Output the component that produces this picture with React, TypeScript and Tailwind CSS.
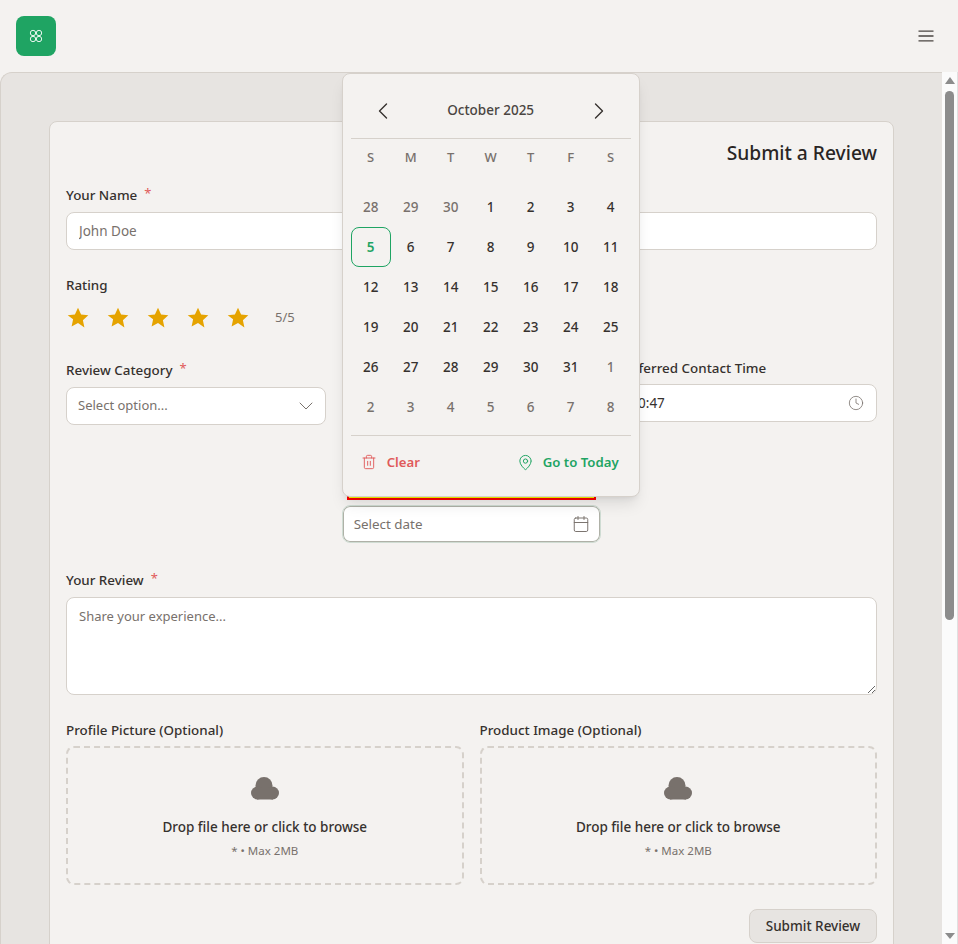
import { Calendar, ChevronDown, ChevronLeft, ChevronRight, Clock, MapPin, Trash2 } from 'lucide-react'

const font = "font-['Noto_Sans','Open_Sans',sans-serif]"

const days: [number, boolean][] = [
    [28, true], [29, true], [30, true], [1, false], [2, false], [3, false], [4, false],
    [5, false], [6, false], [7, false], [8, false], [9, false], [10, false], [11, false],
    [12, false], [13, false], [14, false], [15, false], [16, false], [17, false], [18, false],
    [19, false], [20, false], [21, false], [22, false], [23, false], [24, false], [25, false],
    [26, false], [27, false], [28, false], [29, false], [30, false], [31, false], [1, true],
    [2, true], [3, true], [4, true], [5, true], [6, true], [7, true], [8, true],
]

function Label({ text, required }: { text: string; required?: boolean }) {
    return (
        <label className="flex h-[17px] items-center text-[13.4px] font-medium leading-[17px] text-[#36312e]">
            {text}
            {required && <span className="ml-[7px] -translate-y-[2px] text-[13px] font-normal text-[#e05a5a]">*</span>}
        </label>
    )
}

function DatePopover() {
    return (
        <div className="absolute bottom-[46px] left-0 z-10 h-[424px] w-[298px] rounded-lg border border-[#d6d1cb] bg-[#f4f2f0] px-2 shadow-lg">
            <div className="flex h-[65px] items-center justify-between border-b border-[#d6d1cb] px-[18px] pt-[9px]">
                <ChevronLeft size={28} strokeWidth={1.2} className="text-[#36312e]" />
                <span className="text-[13.5px] font-medium text-[#4a4541]">October 2025</span>
                <ChevronRight size={28} strokeWidth={1.2} className="text-[#36312e]" />
            </div>
            <div className="grid h-[38px] grid-cols-7 items-center">
                {['S', 'M', 'T', 'W', 'T', 'F', 'S'].map((d, i) => (
                    <span key={i} className="text-center text-[13px] font-medium text-[#78716c]">{d}</span>
                ))}
            </div>
            <div className="mt-[10px] grid grid-cols-7 border-b border-[#d6d1cb] pb-[8px]">
                {days.map(([d, muted], i) => (
                    <span
                        key={i}
                        className={
                            i === 7
                                ? 'flex size-10 items-center justify-center rounded-lg border border-[#1fa463] text-[13.5px] font-semibold text-[#1fa463]'
                                : muted
                                  ? 'flex size-10 items-center justify-center text-[13.5px] font-medium text-[#78716c]'
                                  : 'flex size-10 items-center justify-center text-[13.5px] font-medium text-[#36312e]'
                        }
                    >
                        {d}
                    </span>
                ))}
            </div>
            <div className="flex h-[53px] items-center justify-between pl-[10px] pr-[12px] text-[13.2px] font-semibold">
                <span className="flex items-center gap-[10px] text-[#e05a5a]">
                    <Trash2 size={16} strokeWidth={1.4} />
                    Clear
                </span>
                <span className="flex items-center gap-[9px] text-[#1fa463]">
                    <MapPin size={17} strokeWidth={1.4} />
                    Go to Today
                </span>
            </div>
        </div>
    )
}

function Upload({ title }: { title: string }) {
    return (
        <div>
            <Label text={title} />
            <div className="mt-[7px] flex h-[139px] flex-col items-center rounded-lg border-2 border-dashed border-[#d6d1cb] pt-[29px]">
                <svg width="28" height="23" viewBox="0 0 28 23" className="fill-[#78716c]">
                    <circle cx="13" cy="8.5" r="8.5" />
                    <circle cx="6.5" cy="16" r="6.5" />
                    <circle cx="21.5" cy="16" r="6.5" />
                    <rect x="6" y="11" width="16" height="11.5" />
                </svg>
                <span className="mt-[18px] text-[13.5px] font-medium leading-[18px] text-[#36312e]">Drop file here or click to browse</span>
                <span className="mt-[7px] text-[11.5px] leading-[16px] text-[#78716c]">* • Max 2MB</span>
            </div>
        </div>
    )
}

function Star() {
    return (
        <svg width="24" height="24" viewBox="0 0 24 24" className="fill-[#e5a300]">
            <path d="M12 1.8l3.1 6.7 7.2.8-5.4 4.9 1.5 7.2L12 17l-6.4 3.4 1.5-7.2L1.7 9.3l7.2-.8z" />
        </svg>
    )
}

export default function App() {
    return (
        <div className={`flex h-screen flex-col overflow-hidden bg-[#f4f2f0] ${font}`}>
            <header className="flex h-[72px] shrink-0 items-center justify-between pl-4 pr-[24px]">
                <div className="flex size-10 items-center justify-center rounded-lg bg-[#1fa463]">
                    <svg width="14" height="14" viewBox="0 0 14 14" fill="none" stroke="white" strokeWidth="1" opacity="0.9">
                        <circle cx="4" cy="4" r="2.7" />
                        <circle cx="10" cy="4" r="2.7" />
                        <circle cx="4" cy="10" r="2.7" />
                        <circle cx="10" cy="10" r="2.7" />
                    </svg>
                </div>
                <svg width="16" height="12" viewBox="0 0 16 12" fill="none" stroke="#4a4541" strokeWidth="1.3">
                    <path d="M0.5 1.2h15M0.5 6h15M0.5 10.8h15" />
                </svg>
            </header>
            <div className="flex min-h-0 flex-1">
                <main className="flex-1 rounded-tl-xl border-l border-t border-[#d6d1cb] bg-[#e7e4e1] px-[48px] pt-[48px]">
                    <div className="h-[900px] rounded-lg border border-[#d6d1cb] bg-[#f4f2f0] px-4">
                        <h1 className="pt-[18px] text-right text-[19.2px] font-medium leading-[26px] text-[#292524]">Submit a Review</h1>
                        <div className="mt-[21px]">
                            <Label text="Your Name" required />
                            <input
                                placeholder="John Doe"
                                className="mt-[8px] h-[38px] w-full rounded-lg border border-[#d6d1cb] bg-white px-3 text-[13.5px] outline-none placeholder:text-[#78716c]"
                            />
                        </div>
                        <div className="mt-[27px]">
                            <Label text="Rating" />
                            <div className="mt-[12px] flex h-6 items-center gap-4">
                                <Star /><Star /><Star /><Star /><Star />
                                <span className="ml-[9px] text-[13px] text-[#78716c]">5/5</span>
                            </div>
                        </div>
                        <div className="mt-[32px] grid grid-cols-3 items-start gap-4">
                            <div>
                                <Label text="Review Category" required />
                                <div className="mt-[8px] flex h-[38px] items-center justify-between rounded-lg border border-[#d6d1cb] bg-white pl-[11px] pr-[7px] text-[13px] text-[#78716c]">
                                    Select option...
                                    <ChevronDown size={24} strokeWidth={1} />
                                </div>
                            </div>
                            <div className="relative">
                                <div className="mx-[5px] h-[138px] border-2 border-[#f00] bg-[#ff0]" />
                                <div className="mt-[5px] flex h-[38px] items-center justify-between rounded-lg border border-[#cfdcd3] bg-white pl-[11px] pr-[10px] text-[13.4px] text-[#78716c] ring-1 ring-inset ring-[#afb1a7]">
                                    Select date
                                    <Calendar size={18} strokeWidth={1.3} />
                                </div>
                                <DatePopover />
                            </div>
                            <div className="-mt-[2px]">
                                <Label text="Preferred Contact Time" />
                                <div className="mt-[7px] flex h-[38px] items-center justify-between rounded-lg border border-[#d6d1cb] bg-white pl-3 pr-[12px] text-[13.5px] text-[#36312e]">
                                    10:47
                                    <Clock size={16} strokeWidth={1.2} className="text-[#78716c]" />
                                </div>
                            </div>
                        </div>
                        <div className="mt-[29px]">
                            <Label text="Your Review" required />
                            <textarea
                                placeholder="Share your experience..."
                                className="mt-[8px] block h-[98px] w-full rounded-lg border border-[#d6d1cb] bg-white px-3 pb-2 pt-[9px] text-[13px] outline-none placeholder:text-[#78716c]"
                            />
                        </div>
                        <div className="mt-[27px] grid grid-cols-2 gap-4">
                            <Upload title="Profile Picture (Optional)" />
                            <Upload title="Product Image (Optional)" />
                        </div>
                        <div className="mt-[24px] flex justify-end">
                            <button className="h-[34px] w-[128px] rounded-lg border border-[#d6d1cb] bg-[#e7e4e1] text-[13.5px] font-medium text-[#36312e]">Submit Review</button>
                        </div>
                    </div>
                </main>
                <div className="flex w-[16px] shrink-0 flex-col items-center border-r border-[#e0e0e0] bg-[#fbfbfb] pt-[5px]">
                    <div className="size-0 border-x-[5px] border-b-[7px] border-x-transparent border-b-[#8c8c8c]" />
                    <div className="mt-[7px] h-[529px] w-[9px] rounded-full bg-[#8c8c8c]" />
                    <div className="mb-[5px] mt-auto size-0 border-x-[5px] border-t-[6px] border-x-transparent border-t-[#8c8c8c]" />
                </div>
            </div>
        </div>
    )
}
